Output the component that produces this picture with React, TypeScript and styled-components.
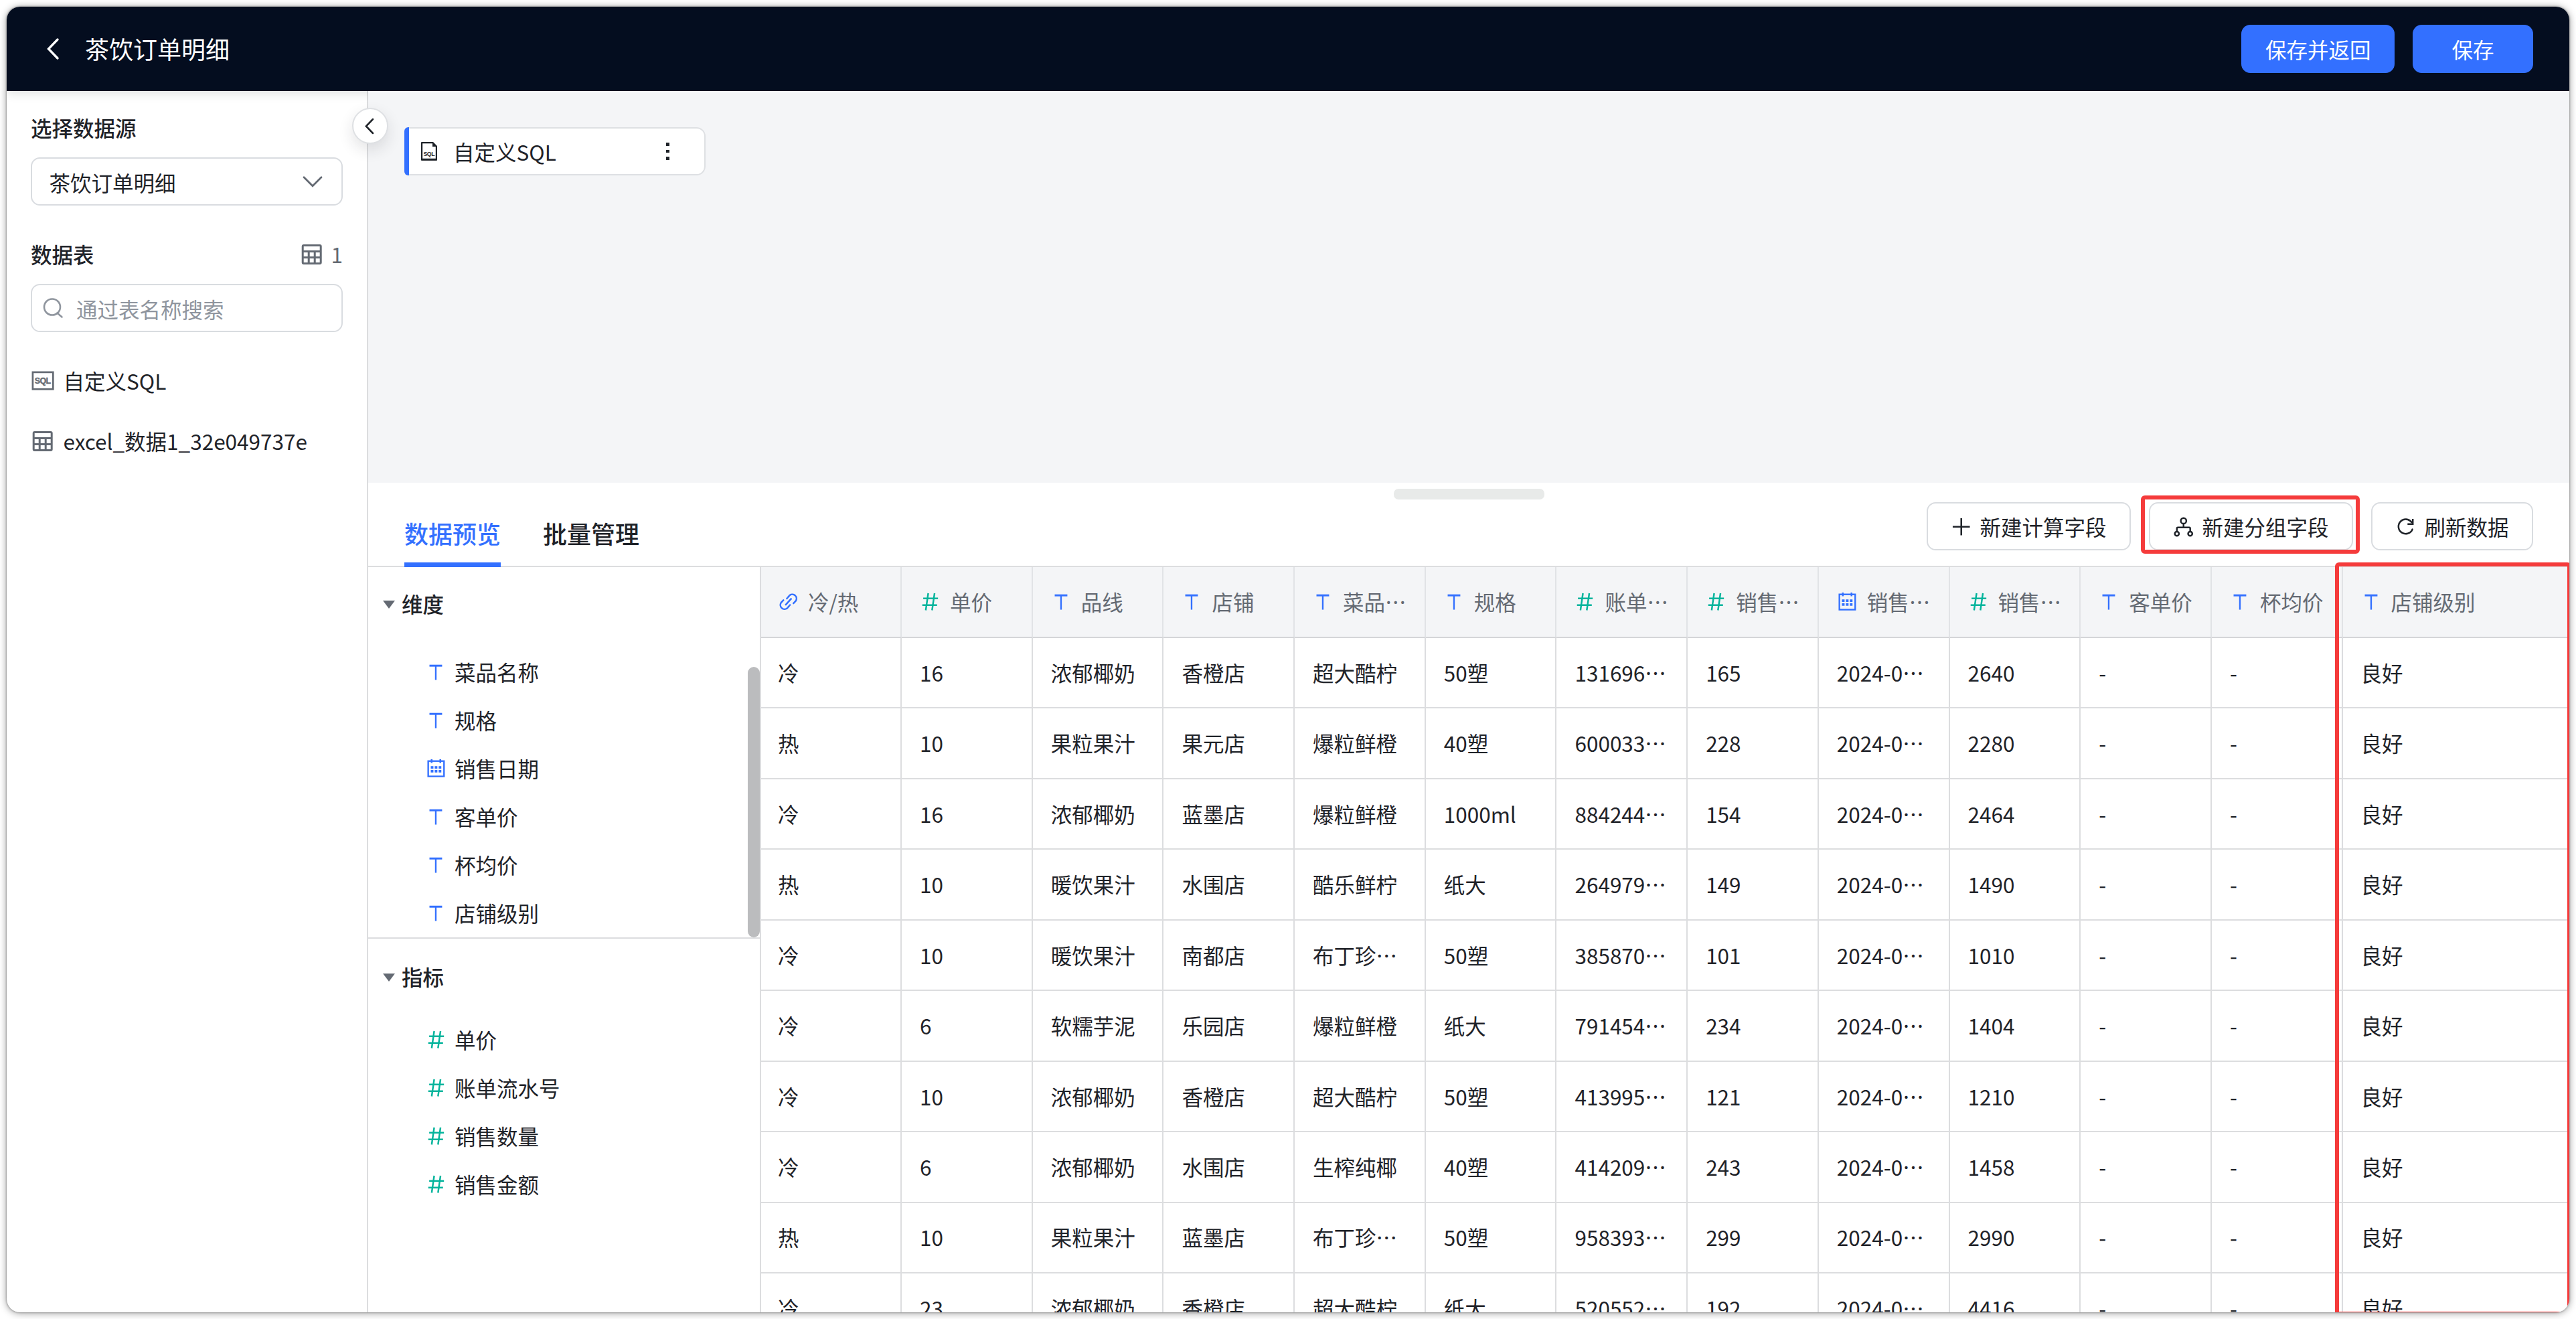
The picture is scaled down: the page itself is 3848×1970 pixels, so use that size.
import React from "react";
import styled, { createGlobalStyle, css } from "styled-components";

const color = {
  ink: "#1f2329",
  sub: "#646a73",
  hint: "#8f959e",
  blue: "#3370ff",
  green: "#04b49c",
  red: "#f53b3b",
  line: "#dcdddf",
  control: "#d9dce0",
  canvas: "#f4f5f7",
};

const GlobalStyle = createGlobalStyle`
  html, body { margin: 0; background: #fff; }
  * { box-sizing: border-box; }
  body {
    width: 3848px;
    height: 1970px;
    overflow: hidden;
    font-family: "Noto Sans CJK SC", "Noto Sans", sans-serif;
    font-size: 31.5px;
    line-height: 49.5px;
    color: ${color.ink};
  }
  button { font: inherit; color: inherit; }
  svg { display: block; flex: none; }
`;

/* ---------- icons ---------- */

type IconProps = { size?: number };

const ChevronLeft = ({ size = 36 }: IconProps) => (
  <svg width={size} height={size} viewBox="0 0 36 36" fill="none" stroke="currentColor" strokeWidth="3.4">
    <path d="M24 4 L10.5 18 L24 32" strokeLinecap="round" />
  </svg>
);

const ChevronDown = () => (
  <svg width="32" height="32" viewBox="0 0 32 32" fill="none" stroke={color.sub} strokeWidth="2.8">
    <path d="M3 9.8 L16 22.8 L29 9.8" strokeLinecap="round" />
  </svg>
);

const TableIcon = () => (
  <svg width="36" height="36" viewBox="0 0 36 36" fill="none" stroke={color.sub} strokeWidth="3">
    <rect x="4.2" y="4.5" width="27" height="27" rx="1.5" />
    <path d="M4 13.5 H31.5 M4 22.5 H31.5 M13.2 14 V31 M22.2 14 V31" />
  </svg>
);

const SearchIcon = () => (
  <svg width="32" height="32" viewBox="0 0 32 32" fill="none" stroke={color.hint} strokeWidth="2.6">
    <circle cx="15" cy="14.5" r="12" />
    <path d="M22.5 23.5 L29.5 29.5" strokeLinecap="round" />
  </svg>
);

const SqlBadge = () => (
  <svg width="36" height="36" viewBox="0 0 36 36">
    <rect x="2.9" y="4.9" width="30.4" height="25.4" fill="none" stroke={color.sub} strokeWidth="2.7" />
    <text
      x="18"
      y="22"
      textAnchor="middle"
      fontFamily="Liberation Sans, sans-serif"
      fontWeight="700"
      fontSize="12.4"
      fill={color.sub}
      stroke={color.sub}
      strokeWidth="0.4"
      textLength="24.4"
    >
      SQL
    </text>
  </svg>
);

const SqlFile = () => (
  <svg width="32" height="32" viewBox="0 0 32 32">
    <path d="M5.1 3.1 H21.5 L26.9 8.5 V28.6 H5.1 Z" fill="none" stroke={color.ink} strokeWidth="2.2" strokeLinejoin="round" />
    <path d="M21 2.4 L28 9 H21 Z" fill={color.ink} />
    <path d="M4 28.2 H28" stroke={color.ink} strokeWidth="2.8" />
    <text x="16" y="22.7" textAnchor="middle" fontFamily="Liberation Sans, sans-serif" fontWeight="700" fontSize="8.8" fill={color.ink} textLength="17">
      SQL
    </text>
  </svg>
);

const PlusIcon = () => (
  <svg width="31.5" height="31.5" viewBox="0 0 32 32" stroke="currentColor" strokeWidth="2.6">
    <path d="M16 3 V29 M3 16 H29" />
  </svg>
);

const GroupIcon = () => (
  <svg width="31.5" height="31.5" viewBox="0 0 32 32" fill="none" stroke="currentColor" strokeWidth="2.5">
    <circle cx="16" cy="7" r="4.2" />
    <circle cx="5.9" cy="26.5" r="3.2" />
    <circle cx="26.1" cy="26.5" r="3.2" />
    <path d="M16 11.2 V17 M5.9 23 V18.5 Q5.9 17 7.4 17 H24.6 Q26.1 17 26.1 18.5 V23" />
  </svg>
);

const RefreshIcon = () => (
  <svg width="31.5" height="31.5" viewBox="0 0 32 32" fill="none" stroke="currentColor" strokeWidth="2.6">
    <path d="M26 20 A11 11 0 1 1 24.8 9.2" strokeLinecap="round" />
    <path d="M26.6 4 V12 H18.6" />
  </svg>
);

type FieldKind = "text" | "number" | "date" | "link";

const FieldIcon = ({ kind }: { kind: FieldKind }) => {
  if (kind === "text")
    return (
      <svg width="31.5" height="31.5" viewBox="0 0 32 32" stroke={color.blue} strokeWidth="2.4">
        <path d="M5.6 6.3 H24.8" strokeWidth="3" />
        <path d="M15.2 6 V28" />
      </svg>
    );
  if (kind === "number")
    return (
      <svg width="31.5" height="31.5" viewBox="0 0 32 32" stroke={color.green} strokeWidth="2.5">
        <path d="M5.2 11 H27.6 M3.8 21 H26.2 M12.8 3 L9 29 M22.4 3 L18.6 29" />
      </svg>
    );
  if (kind === "date")
    return (
      <svg width="31.5" height="31.5" viewBox="0 0 32 32" fill={color.blue}>
        <rect x="3.7" y="4.8" width="24" height="23.2" fill="none" stroke={color.blue} strokeWidth="2.4" />
        <path d="M7.6 2 h2.6 v5.5 h-2.6 Z M20.8 2 h2.6 v5.5 h-2.6 Z" />
        <path d="M7.6 12.4 h4 v3.8 h-4 Z M13.6 12.4 h4 v3.8 h-4 Z M19.6 12.4 h4 v3.8 h-4 Z" />
        <path d="M7.6 18.2 h4 v3.8 h-4 Z M13.6 18.2 h4 v3.8 h-4 Z M19.6 18.2 h4 v3.8 h-4 Z" />
      </svg>
    );
  return (
    <svg width="31.5" height="31.5" viewBox="0 0 32 32" stroke={color.blue} fill="none" strokeWidth="2.5" strokeLinecap="round">
      <path d="M13.6 11.2 L18 6 A6.4 6.4 0 0 1 27.2 14.6 L23.6 18.4" />
      <path d="M18.4 20.8 L14 26 A6.4 6.4 0 0 1 4.8 17.4 L8.4 13.6" />
      <path d="M12 20.4 L20 11.6" />
    </svg>
  );
};

/* ---------- window ---------- */

const Stage = styled.div`
  display: flow-root;
  height: 1970px;
`;

const Window = styled.div`
  display: flex;
  flex-direction: column;
  width: 3828px;
  height: 1950px;
  margin: 10px;
  border-radius: 20px;
  overflow: hidden;
  background: #fff;
  box-shadow: 0 0 3px rgba(0, 0, 0, 0.45), 0 1px 12px rgba(0, 0, 0, 0.4);
`;

const TopBar = styled.header`
  position: relative;
  flex: none;
  display: flex;
  align-items: center;
  height: 126px;
  padding: 0 54px 0 52px;
  background: #040d1f;
  color: #fff;
  box-shadow: 0 4px 14px rgba(31, 35, 41, 0.13);
  z-index: 1;
`;

const PageTitle = styled.h1`
  flex: 1;
  margin: 0 0 0 29px;
  font-size: 36px;
  font-weight: 400;
`;

const PrimaryButton = styled.button`
  height: 72px;
  min-width: 180px;
  margin-left: 27px;
  padding: 0 35.5px;
  border: 0;
  border-radius: 13.5px;
  background: ${color.blue};
  line-height: 73px;
`;

const Body = styled.div`
  position: relative;
  flex: 1;
  display: flex;
  min-height: 0;
`;

/* ---------- sidebar ---------- */

const Sidebar = styled.aside`
  flex: none;
  width: 540px;
  padding: 30px 36px 0;
  border-right: 2px solid ${color.line};
`;

const SideHeading = styled.div<{ $gapTop?: number }>`
  display: flex;
  align-items: center;
  justify-content: space-between;
  height: 49.5px;
  margin: ${(p) => p.$gapTop ?? 0}px 0 19.5px;
  font-weight: 500;
`;

const TableCount = styled.span`
  display: flex;
  align-items: center;
  gap: 11px;
  font-weight: 400;
  color: ${color.sub};
`;

const Field = styled.div<{ $search?: boolean }>`
  display: flex;
  align-items: center;
  height: 72px;
  border: 2px solid ${color.control};
  border-radius: 13.5px;
  line-height: 51px;
  ${(p) =>
    p.$search
      ? css`
          gap: 19px;
          padding: 0 15px;
          color: ${color.hint};
        `
      : css`
          justify-content: space-between;
          padding: 0 27px 0 25.5px;
        `}
`;

const FieldText = styled.span`
  padding-top: 2px;
`;

const TableList = styled.ul`
  margin: 27.7px 0 0;
  padding: 0;
  list-style: none;
`;

const TableItem = styled.li`
  display: flex;
  align-items: center;
  gap: 12.5px;
  height: 90px;
`;

const CollapseButton = styled.button`
  position: absolute;
  top: 25px;
  left: 516px;
  z-index: 3;
  display: flex;
  align-items: center;
  justify-content: center;
  width: 54px;
  height: 54px;
  padding: 0 2px 0 0;
  border: 2px solid #dee0e3;
  border-radius: 50%;
  background: #fff;
  box-shadow: 0 9px 22px rgba(31, 35, 41, 0.12);
`;

/* ---------- canvas ---------- */

const Main = styled.main`
  position: relative;
  flex: 1;
  display: flex;
  flex-direction: column;
  min-width: 0;
  z-index: 2;
`;

const Canvas = styled.section`
  flex: none;
  height: 585px;
  padding: 52px 54px;
  border-top: 2px solid #fbfbfc;
  background: ${color.canvas};
`;

const NodeCard = styled.div`
  display: flex;
  align-items: center;
  width: 450px;
  height: 72px;
  padding-right: 52px;
  border: 2px solid #dee0e3;
  border-left: 0;
  border-radius: 6px 13.5px 13.5px 6px;
  background: #fff;
`;

const NodeAccent = styled.span`
  align-self: stretch;
  width: 7px;
  margin: -2px 14px -2px 0;
  border-radius: 6px 0 0 6px;
  background: ${color.blue};
`;

const NodeName = styled.span`
  flex: 1;
  margin-left: 20px;
  padding-top: 2px;
`;

const NodeMenu = styled.span`
  display: grid;
  gap: 6px;
  i {
    width: 4.6px;
    height: 4.6px;
    background: ${color.ink};
  }
`;

/* ---------- preview panel ---------- */

const Preview = styled.section`
  position: relative;
  flex: 1;
  display: flex;
  flex-direction: column;
  min-height: 0;
  background: #fff;
`;

const DragHandle = styled.div`
  position: absolute;
  top: 9px;
  left: 1531.5px;
  width: 225px;
  height: 16px;
  border-radius: 7px;
  background: #e8eae9;
`;

const TabBar = styled.div`
  flex: none;
  display: flex;
  align-items: flex-end;
  height: 126px;
  padding: 0 54px;
  border-bottom: 2px solid ${color.line};
`;

const Tab = styled.div<{ $active?: boolean }>`
  height: 78px;
  margin: 0 63px -2px 0;
  border-bottom: 7px solid ${(p) => (p.$active ? color.blue : "transparent")};
  font-size: 36px;
  font-weight: 500;
  line-height: 54px;
  color: ${(p) => (p.$active ? color.blue : color.ink)};
`;

const Actions = styled.div`
  display: flex;
  gap: 27px;
  margin: 0 0 23px auto;
`;

const ActionSlot = styled.div`
  position: relative;
`;

const ActionButton = styled.button`
  display: flex;
  align-items: center;
  gap: 11.5px;
  height: 72px;
  padding: 1px 34.5px 0;
  border: 2px solid ${color.control};
  border-radius: 13.5px;
  background: #fff;
  white-space: nowrap;
`;

const ButtonMark = styled.div`
  position: absolute;
  inset: -10px -10px -5px -12px;
  border: 6px solid ${color.red};
  border-radius: 6px;
`;

const ColumnMark = styled.div`
  position: absolute;
  top: 119px;
  left: 2938px;
  width: 353px;
  height: 1125px;
  border: 6px solid ${color.red};
  border-radius: 6px;
`;

const PreviewBody = styled.div`
  flex: 1;
  display: flex;
  min-height: 0;
`;

const Tree = styled.nav`
  flex: none;
  width: 585px;
`;

const TreeSection = styled.div<{ $first?: boolean }>`
  position: relative;
  padding-top: ${(p) => (p.$first ? 18.7 : 20.5)}px;
  ${(p) => p.$first && `height: 555px; border-bottom: 2px solid ${color.line};`}
`;

const TreeHeading = styled.div<{ $gap: number }>`
  display: flex;
  align-items: center;
  gap: 10px;
  height: 72px;
  margin-bottom: ${(p) => p.$gap}px;
  padding-left: 22px;
  font-weight: 500;
  &::before {
    content: "";
    margin-top: 2px;
    border: 9px solid transparent;
    border-top: 12px solid ${color.sub};
    border-bottom: 0;
  }
`;

const TreeItem = styled.div`
  display: flex;
  align-items: center;
  gap: 11.5px;
  height: 72px;
  padding-left: 86px;
`;

const Scrollbar = styled.div`
  position: absolute;
  top: 149px;
  right: 0;
  width: 18px;
  height: 404px;
  border-radius: 9px;
  background: #bbbcbe;
`;

const Grid = styled.div`
  flex: 1;
  min-width: 0;
  overflow: hidden;
  border-left: 2px solid ${color.line};
`;

const Row = styled.div<{ $head?: boolean }>`
  display: grid;
  grid-template-columns: 210px repeat(11, 195.7px) 1fr;
  height: ${(p) => (p.$head ? 106 : 105.45)}px;
  ${(p) => p.$head && `background: ${color.canvas}; color: ${color.sub};`}
  & > * {
    border-bottom: 2px solid ${(p) => (p.$head ? "#d4d5d8" : color.line)};
    border-right: 2px solid ${(p) => (p.$head ? "#e1e3e6" : color.line)};
  }
`;

const Cell = styled.div`
  display: flex;
  align-items: center;
  gap: 13.5px;
  padding-left: 27px;
  overflow: hidden;
  white-space: nowrap;
  &:first-child {
    padding-left: 25px;
  }
  &:last-child {
    border-right: 0;
  }
`;

/* ---------- data ---------- */

const columns: [FieldKind, string][] = [
  ["link", "冷/热"],
  ["number", "单价"],
  ["text", "品线"],
  ["text", "店铺"],
  ["text", "菜品…"],
  ["text", "规格"],
  ["number", "账单…"],
  ["number", "销售…"],
  ["date", "销售…"],
  ["number", "销售…"],
  ["text", "客单价"],
  ["text", "杯均价"],
  ["text", "店铺级别"],
];

const rows = [
  ["冷", "16", "浓郁椰奶", "香橙店", "超大酷柠", "50塑", "131696…", "165", "2640"],
  ["热", "10", "果粒果汁", "果元店", "爆粒鲜橙", "40塑", "600033…", "228", "2280"],
  ["冷", "16", "浓郁椰奶", "蓝墨店", "爆粒鲜橙", "1000ml", "884244…", "154", "2464"],
  ["热", "10", "暖饮果汁", "水围店", "酷乐鲜柠", "纸大", "264979…", "149", "1490"],
  ["冷", "10", "暖饮果汁", "南都店", "布丁珍…", "50塑", "385870…", "101", "1010"],
  ["冷", "6", "软糯芋泥", "乐园店", "爆粒鲜橙", "纸大", "791454…", "234", "1404"],
  ["冷", "10", "浓郁椰奶", "香橙店", "超大酷柠", "50塑", "413995…", "121", "1210"],
  ["冷", "6", "浓郁椰奶", "水围店", "生榨纯椰", "40塑", "414209…", "243", "1458"],
  ["热", "10", "果粒果汁", "蓝墨店", "布丁珍…", "50塑", "958393…", "299", "2990"],
  ["冷", "23", "浓郁椰奶", "香橙店", "超大酷柠", "纸大", "520552…", "192", "4416"],
].map((r) => [...r.slice(0, 8), "2024-0…", r[8], "-", "-", "良好"]);

const dimensions: [FieldKind, string][] = [
  ["text", "菜品名称"],
  ["text", "规格"],
  ["date", "销售日期"],
  ["text", "客单价"],
  ["text", "杯均价"],
  ["text", "店铺级别"],
];

const measures = ["单价", "账单流水号", "销售数量", "销售金额"];

export default function App() {
  return (
    <Stage lang="zh-CN">
      <GlobalStyle />
      <Window>
        <TopBar>
          <ChevronLeft />
          <PageTitle>茶饮订单明细</PageTitle>
          <PrimaryButton>保存并返回</PrimaryButton>
          <PrimaryButton>保存</PrimaryButton>
        </TopBar>
        <Body>
          <Sidebar>
            <SideHeading>选择数据源</SideHeading>
            <Field>
              <FieldText>茶饮订单明细</FieldText>
              <ChevronDown />
            </Field>
            <SideHeading $gapTop={48}>
              数据表
              <TableCount>
                <TableIcon />1
              </TableCount>
            </SideHeading>
            <Field $search>
              <SearchIcon />
              <FieldText>通过表名称搜索</FieldText>
            </Field>
            <TableList>
              <TableItem>
                <SqlBadge />
                自定义SQL
              </TableItem>
              <TableItem>
                <TableIcon />
                excel_数据1_32e049737e
              </TableItem>
            </TableList>
          </Sidebar>
          <Main>
            <Canvas>
              <NodeCard>
                <NodeAccent />
                <SqlFile />
                <NodeName>自定义SQL</NodeName>
                <NodeMenu>
                  <i />
                  <i />
                  <i />
                </NodeMenu>
              </NodeCard>
            </Canvas>
            <Preview>
              <DragHandle />
              <TabBar>
                <Tab $active>数据预览</Tab>
                <Tab>批量管理</Tab>
                <Actions>
                  <ActionButton>
                    <PlusIcon />
                    新建计算字段
                  </ActionButton>
                  <ActionSlot>
                    <ActionButton>
                      <GroupIcon />
                      新建分组字段
                    </ActionButton>
                    <ButtonMark />
                  </ActionSlot>
                  <ActionButton>
                    <RefreshIcon />
                    刷新数据
                  </ActionButton>
                </Actions>
              </TabBar>
              <PreviewBody>
                <Tree>
                  <TreeSection $first>
                    <TreeHeading $gap={29.8}>维度</TreeHeading>
                    {dimensions.map(([kind, name]) => (
                      <TreeItem key={name}>
                        <FieldIcon kind={kind} />
                        {name}
                      </TreeItem>
                    ))}
                    <Scrollbar />
                  </TreeSection>
                  <TreeSection>
                    <TreeHeading $gap={22.5}>指标</TreeHeading>
                    {measures.map((name) => (
                      <TreeItem key={name}>
                        <FieldIcon kind="number" />
                        {name}
                      </TreeItem>
                    ))}
                  </TreeSection>
                </Tree>
                <Grid>
                  <Row $head>
                    {columns.map(([kind, name], i) => (
                      <Cell key={i}>
                        <FieldIcon kind={kind} />
                        {name}
                      </Cell>
                    ))}
                  </Row>
                  {rows.map((row, r) => (
                    <Row key={r}>
                      {row.map((value, i) => (
                        <Cell key={i}>{value}</Cell>
                      ))}
                    </Row>
                  ))}
                </Grid>
              </PreviewBody>
              <ColumnMark />
            </Preview>
          </Main>
          <CollapseButton>
            <ChevronLeft size={27} />
          </CollapseButton>
        </Body>
      </Window>
    </Stage>
  );
}
